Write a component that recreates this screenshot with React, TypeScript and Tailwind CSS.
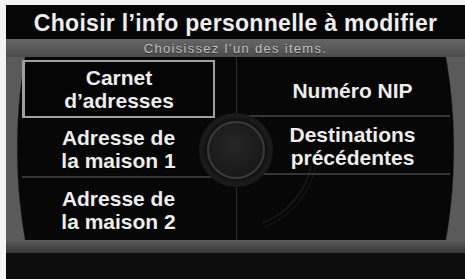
export default function App() {
  const item = "text-[21px] font-bold leading-[23px] text-[#ededed] text-center [text-shadow:0_1px_1px_#000]";
  return (
    <div className="w-[465px] h-[279px] bg-[#f4f4f4] pt-[5px] pl-[6px] overflow-hidden font-['Liberation_Sans',Arial,sans-serif]">
      <div className="flex flex-col h-full bg-black">
        <div className="h-[34px] shrink-0 bg-[#060606] flex items-center justify-center">
          <span className="text-[23px] font-bold tracking-[0.3px] text-[#eeeeee] leading-none pt-[2px]">
            Choisir l’info personnelle à modifier
          </span>
        </div>
        <div className="h-[18px] shrink-0 bg-gradient-to-b from-[#666666] to-[#4c4c4c] flex items-center justify-center">
          <span className="text-[13px] tracking-[1.3px] text-[#c4c4c4] leading-none pt-[1px] [text-shadow:0_1px_0_#2a2a2a]">
            Choisissez l’un des items.
          </span>
        </div>
        <div className="relative h-[183px] shrink-0 flex pl-[16px] pr-[15px] bg-[radial-gradient(ellipse_219px_344px_at_50%_50%,#070707_99.4%,#5a5a5a_100%)]">
          <svg className="absolute inset-0 pointer-events-none" width="459" height="183" viewBox="0 0 459 183">
            <path d="M 305 109 A 77 77 0 0 1 256 166" fill="none" stroke="#222222" strokeWidth="1.2" />
            <path d="M 309 111 A 81 81 0 0 1 258 170" fill="none" stroke="#1a1a1a" strokeWidth="1" />
          </svg>
          <div className="w-[214px] flex flex-col relative">
            <div className="h-[61px] pt-[3px]">
              <div className="h-[58px] w-[193px] border-2 border-l-[3px] border-[#a0a0a0] bg-[#050505] flex flex-col items-center justify-center">
                <span className={item}>Carnet</span>
                <span className={item}>d’adresses</span>
              </div>
            </div>
            <div className="h-[58px] w-[193px] flex flex-col items-center justify-center pt-[3px]">
              <span className={item}>Adresse de</span>
              <span className={item}>la maison 1</span>
            </div>
            <div className="flex-1 border-t-2 border-[#363636] w-[200px] flex flex-col items-center justify-center pr-[7px] pt-[2px]">
              <span className={item}>Adresse de</span>
              <span className={item}>la maison 2</span>
            </div>
          </div>
          <div className="flex-1 border-l border-[#2c2c2c] flex flex-col relative">
            <div className="h-[60px] border-b-2 border-[#363636] flex items-center justify-center pl-[18px] pt-[8px]">
              <span className={item}>Numéro NIP</span>
            </div>
            <div className="h-[58px] border-b-2 border-[#363636] flex flex-col items-center justify-center pl-[18px] pt-[2px]">
              <span className={item}>Destinations</span>
              <span className={item}>précédentes</span>
            </div>
            <div className="flex-1" />
          </div>
          <div className="absolute left-[193px] top-[56px] w-[74px] h-[74px] rounded-full bg-[radial-gradient(circle,#1e1e1e_60%,#181818_78%,#0a0a0a_100%)] flex items-center justify-center">
            <div className="w-[58px] h-[58px] rounded-full border-2 border-[#3a3a3a] bg-[radial-gradient(circle_at_45%_40%,#262626,#131313)] shadow-[0_0_4px_2px_#0c0c0c]" />
          </div>
        </div>
        <div className="h-[13px] shrink-0 bg-gradient-to-b from-[#5c5c5c] via-[#474747] to-[#383838]" />
        <div className="flex-1 bg-[#0d0d0d]" />
      </div>
    </div>
  );
}
